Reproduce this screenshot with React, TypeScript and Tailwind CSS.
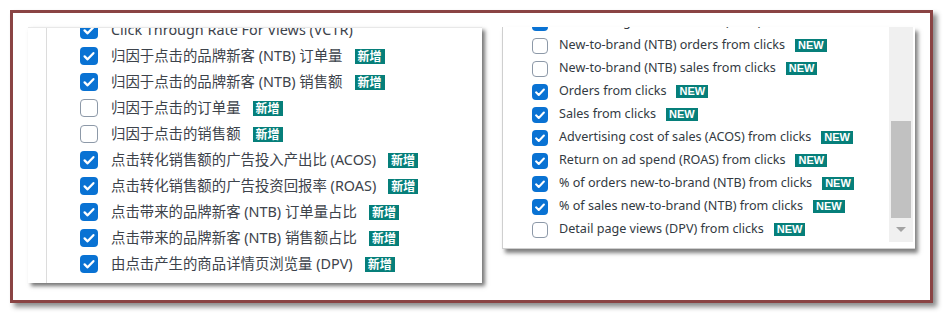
import React from "react";

type Item = { label: string; checked: boolean; badge?: boolean };

const zhItems: Item[] = [
  { label: "Click Through Rate For Views (VCTR)", checked: true, badge: false },
  { label: "归因于点击的品牌新客 (NTB) 订单量", checked: true },
  { label: "归因于点击的品牌新客 (NTB) 销售额", checked: true },
  { label: "归因于点击的订单量", checked: false },
  { label: "归因于点击的销售额", checked: false },
  { label: "点击转化销售额的广告投入产出比 (ACOS)", checked: true },
  { label: "点击转化销售额的广告投资回报率 (ROAS)", checked: true },
  { label: "点击带来的品牌新客 (NTB) 订单量占比", checked: true },
  { label: "点击带来的品牌新客 (NTB) 销售额占比", checked: true },
  { label: "由点击产生的商品详情页浏览量 (DPV)", checked: true },
];

const enItems: Item[] = [
  { label: "Click-through rate for views (vCTR)", checked: true, badge: false },
  { label: "New-to-brand (NTB) orders from clicks", checked: false },
  { label: "New-to-brand (NTB) sales from clicks", checked: false },
  { label: "Orders from clicks", checked: true },
  { label: "Sales from clicks", checked: true },
  { label: "Advertising cost of sales (ACOS) from clicks", checked: true },
  { label: "Return on ad spend (ROAS) from clicks", checked: true },
  { label: "% of orders new-to-brand (NTB) from clicks", checked: true },
  { label: "% of sales new-to-brand (NTB) from clicks", checked: true },
  { label: "Detail page views (DPV) from clicks", checked: false },
];

function Box({ checked, size }: { checked: boolean; size: number }) {
  if (!checked) {
    return (
      <span
        className="box-border shrink-0 rounded-[4px] border-[1.5px] border-[#8d99a8] bg-white"
        style={{ width: size, height: size }}
      />
    );
  }
  return (
    <span
      className="flex shrink-0 items-center justify-center rounded-[4px] bg-[#0972d3]"
      style={{ width: size, height: size }}
    >
      <svg width={size} height={size} viewBox="0 0 18 18" fill="none">
        <path d="M4.6 9.4 7.6 12.3 13.4 6.2" stroke="#fff" strokeWidth="2.3" strokeLinecap="round" strokeLinejoin="round" />
      </svg>
    </span>
  );
}

export default function App() {
  return (
    <div className="h-[315px] w-[945px] bg-white p-[10px]">
      <div className="flex h-[293px] w-[923px] items-start gap-[20px] border-[3px] border-[#8a4444] bg-white pl-[15px] pt-[14px] shadow-[4px_4px_5px_rgba(0,0,0,0.45)]">
        {/* 中文面板 */}
        <div className="flex h-[256px] w-[454px] overflow-hidden border-t border-[#e8e8e8] bg-white shadow-[3px_3px_4px_rgba(0,0,0,0.55)]">
          <div className="ml-[18px] w-px shrink-0 bg-[#dcdcdc]" />
          <div className="-mt-[11px] pl-[33px]">
            {zhItems.map((it) => (
              <div key={it.label} className="flex h-[26px] items-center">
                <Box checked={it.checked} size={18} />
                <span className="ml-[13px] whitespace-nowrap text-[14.4px] text-[#3d434b] [font-family:'Noto_Sans','Noto_Sans_CJK_SC',sans-serif]">
                  {it.label}
                </span>
                {it.badge !== false && (
                  <span className="ml-[12px] flex h-[15px] items-center bg-[#067f7a] px-[3px] text-[12px] font-bold leading-none text-white [font-family:'Noto_Sans_CJK_SC',sans-serif]">
                    新增
                  </span>
                )}
              </div>
            ))}
          </div>
        </div>

        {/* English panel */}
        <div className="flex h-[222px] w-[413px] overflow-hidden border-b border-l border-[#cfcfcf] bg-white shadow-[3px_4px_4px_rgba(0,0,0,0.5)]">
          <div className="-mt-[16px] flex-1 pl-[29px]">
            {enItems.map((it) => (
              <div key={it.label} className="flex h-[23px] items-center">
                <Box checked={it.checked} size={16} />
                <span className="ml-[11px] whitespace-nowrap text-[12.6px] text-[#333a42] [font-family:'Noto_Sans',sans-serif]">
                  {it.label}
                </span>
                {it.badge !== false && (
                  <span className="ml-[10px] flex h-[13px] items-center bg-[#067f7a] px-[3px] text-[11px] font-bold leading-none text-white [font-family:'Liberation_Sans',Arial,sans-serif]">
                    NEW
                  </span>
                )}
              </div>
            ))}
          </div>
          <div className="mb-[6px] mr-[2px] flex w-[24px] flex-col bg-[#f0f0f0]">
            <div className="h-[94px]" />
            <div className="mx-[2px] h-[97px] bg-[#c1c1c1]" />
            <div className="flex flex-1 items-center justify-center">
              <svg width="10" height="6" viewBox="0 0 10 6">
                <path d="M0 0h10L5 5z" fill="#a3a3a3" />
              </svg>
            </div>
          </div>
        </div>
      </div>
    </div>
  );
}
